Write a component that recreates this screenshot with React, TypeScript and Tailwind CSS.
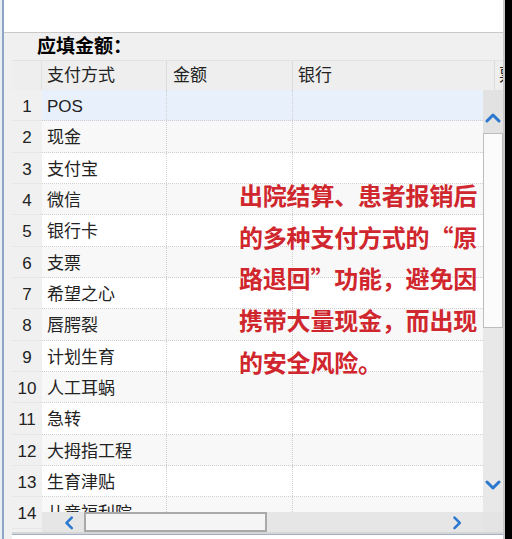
import * as React from 'react';

const rows = [
    'POS', '现金', '支付宝', '微信', '银行卡', '支票', '希望之心',
    '唇腭裂', '计划生育', '人工耳蜗', '急转', '大拇指工程', '生育津贴', '儿童福利院',
];

const uiFont = { fontFamily: '"Liberation Sans", "Noto Sans CJK SC", sans-serif' };

const Chevron: React.FC<{ dir: 'up' | 'down' | 'left' | 'right' }> = ({ dir }) => {
    const pts = {
        up: '2,10 8,4 14,10',
        down: '2,4 8,10 14,4',
        left: '10,2 4,8 10,14',
        right: '4,2 10,8 4,14',
    }[dir];
    return (
        <svg width="16" height="14" viewBox="0 0 16 14" className={dir === 'left' || dir === 'right' ? 'w-[14px] h-[16px]' : ''}>
            <polyline points={pts} fill="none" stroke="#2a78cf" strokeWidth="3" strokeLinecap="round" strokeLinejoin="round" />
        </svg>
    );
};

export default function App() {
    return (
        <div className="relative w-[512px] h-[539px] overflow-hidden bg-white flex" style={uiFont}>
            {/* left window edge */}
            <div className="w-[2px] bg-[#e9eef5]" />
            <div className="w-[2px] bg-[#8ea4c4]" />

            <div className="w-[499px] flex flex-col">
                <div className="h-[32px] bg-white" />
                <div className="h-[1px] bg-[#c9c9c9]" />

                <div className="flex-1 flex flex-col bg-[#f0f0f0] pl-[8px]">
                    <div className="h-[27px] flex items-center pl-[25px] pt-[2px] text-[19px] font-bold text-black">
                        应填金额：
                    </div>

                    {/* column headers */}
                    <div className="h-[30px] flex text-[17px] text-[#222] bg-[#eeeeee] border-t border-[#e2e2e2] overflow-hidden">
                        <div className="w-[30px] border-r border-[#e0e0e0]" />
                        <div className="w-[125px] pl-[5px] pt-[1px] flex items-center border-r border-[#dcdcdc]">支付方式</div>
                        <div className="w-[126px] pl-[6px] pt-[1px] flex items-center border-r border-[#dcdcdc]">金额</div>
                        <div className="w-[202px] pl-[5px] pt-[1px] flex items-center border-r border-[#dcdcdc]">银行</div>
                        <div className="flex-1 pl-[4px] flex items-center whitespace-nowrap overflow-hidden">票据号</div>
                    </div>

                    {/* body */}
                    <div className="flex h-[442px]">
                        <div className="w-[30px] flex flex-col overflow-hidden">
                            {rows.map((_, i) => (
                                <div key={i} className="h-[31.33px] shrink-0 flex items-center justify-center pt-[3px] text-[17px] text-[#222] border-b border-[#e6e6e6]">
                                    {i + 1}
                                </div>
                            ))}
                        </div>

                        <div className="w-[441px] flex flex-col">
                            <div className="h-[422px] overflow-hidden bg-white">
                                {rows.map((name, i) => (
                                    <div
                                        key={name}
                                        className={`h-[31.33px] flex border-b border-dotted border-[#cfcfcf] ${
                                            i === 0 ? 'bg-[#e8f0fc]' : i % 2 === 1 ? 'bg-[#f8f8f8]' : 'bg-white'
                                        }`}
                                    >
                                        <div className="w-[125px] shrink-0 pl-[5px] pt-[3px] flex items-center text-[17px] text-[#222] border-r border-dotted border-[#cfcfcf]">
                                            {name}
                                        </div>
                                        <div className="w-[126px] shrink-0 border-r border-dotted border-[#cfcfcf]" />
                                        <div className="w-[202px] shrink-0" />
                                    </div>
                                ))}
                            </div>

                            {/* horizontal scrollbar */}
                            <div className="h-[20px] flex items-stretch bg-[#e6e6e6]">
                                <div className="w-[42px] flex items-center pl-[21px]">
                                    <Chevron dir="left" />
                                </div>
                                <div className="w-[183px] bg-[#f5f5f5] border-2 border-[#a9a9a9]" />
                                <div className="flex-1" />
                                <div className="w-[40px] flex items-center pl-[8px]">
                                    <Chevron dir="right" />
                                </div>
                            </div>
                        </div>

                        {/* vertical scrollbar */}
                        <div className="w-[20px] flex flex-col bg-[#e8e8e8]">
                            <div className="h-[43px] flex items-end justify-center pb-[8px] bg-[#e2e2e2]">
                                <Chevron dir="up" />
                            </div>
                            <div className="h-[195px] bg-[#fbfbfb] border border-[#bdbdbd]" />
                            <div className="h-[140px]" />
                            <div className="h-[44px] flex items-start justify-center pt-[10px]">
                                <Chevron dir="down" />
                            </div>
                            <div className="flex-1 bg-[#e4e4e4]" />
                        </div>
                    </div>

                    <div className="flex-1 flex flex-col">
                        <div className="h-[2px] bg-[#d6d6d6]" />
                        <div className="flex-1 bg-white border-t border-[#9fb0c6]" />
                    </div>
                </div>
            </div>

            {/* right window edge */}
            <div className="w-[2px] bg-[#c8c8c8]" />
            <div className="flex-1 bg-black" />

            {/* red annotation */}
            <div
                className="absolute left-[239px] top-[174px] w-[250px] text-[24px] leading-[41.7px] font-bold text-[#d0262d] tracking-[-0.2px]"
                style={{ fontFamily: '"Noto Sans CJK SC", sans-serif' }}
                lang="zh-Hans"
            >
                <div>出院结算、患者报销后</div>
                <div>的多种支付方式的“原</div>
                <div>路退回”功能，避免因</div>
                <div>携带大量现金，而出现</div>
                <div>的安全风险。</div>
            </div>
        </div>
    );
}
